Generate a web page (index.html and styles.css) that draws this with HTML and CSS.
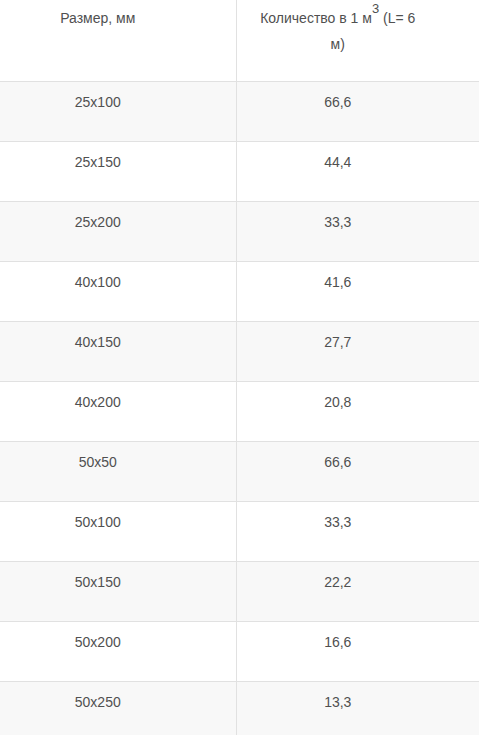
FILE: index.html
```html
<!DOCTYPE html>
<html lang="ru">
<head>
<meta charset="utf-8">
<link rel="stylesheet" href="styles.css">
</head>
<body>
<table class="spec">
  <colgroup><col class="col-size"><col class="col-qty"></colgroup>
  <thead>
    <tr class="head-row">
      <th class="cell">Размер, мм</th>
      <th class="cell">Количество в 1 м<sup class="pow">3</sup> (L= 6 м)</th>
    </tr>
  </thead>
  <tbody>
    <tr class="row"><td class="cell">25x100</td><td class="cell">66,6</td></tr>
    <tr class="row"><td class="cell">25x150</td><td class="cell">44,4</td></tr>
    <tr class="row"><td class="cell">25x200</td><td class="cell">33,3</td></tr>
    <tr class="row"><td class="cell">40x100</td><td class="cell">41,6</td></tr>
    <tr class="row"><td class="cell">40x150</td><td class="cell">27,7</td></tr>
    <tr class="row"><td class="cell">40x200</td><td class="cell">20,8</td></tr>
    <tr class="row"><td class="cell">50x50</td><td class="cell">66,6</td></tr>
    <tr class="row"><td class="cell">50x100</td><td class="cell">33,3</td></tr>
    <tr class="row"><td class="cell">50x150</td><td class="cell">22,2</td></tr>
    <tr class="row"><td class="cell">50x200</td><td class="cell">16,6</td></tr>
    <tr class="row"><td class="cell">50x250</td><td class="cell">13,3</td></tr>
  </tbody>
</table>
</body>
</html>
```
FILE: styles.css
```css
html, body {
  margin: 0;
  padding: 0;
  background: #fff;
}
body {
  font-family: "Liberation Sans", Arial, sans-serif;
  font-size: 14px;
  color: #505050;
  overflow: hidden;
}
.spec {
  border-collapse: collapse;
  table-layout: fixed;
  width: 479px;
}
.col-size { width: 236px; }
.col-qty { width: 243px; }
.cell {
  padding: 8px 60px 27px 20px;
  line-height: 24px;
  text-align: center;
  vertical-align: top;
  font-weight: normal;
  border-bottom: 1px solid #e1e1e1;
}
.cell:first-child {
  border-right: 1px solid #e1e1e1;
}
.head-row .cell {
  padding: 5px 60px 24px 20px;
  line-height: 26px;
}
.row:nth-child(odd) {
  background: #f8f8f8;
}
.pow {
  font-size: 13px;
  line-height: 0;
  vertical-align: 10px;
}
```
